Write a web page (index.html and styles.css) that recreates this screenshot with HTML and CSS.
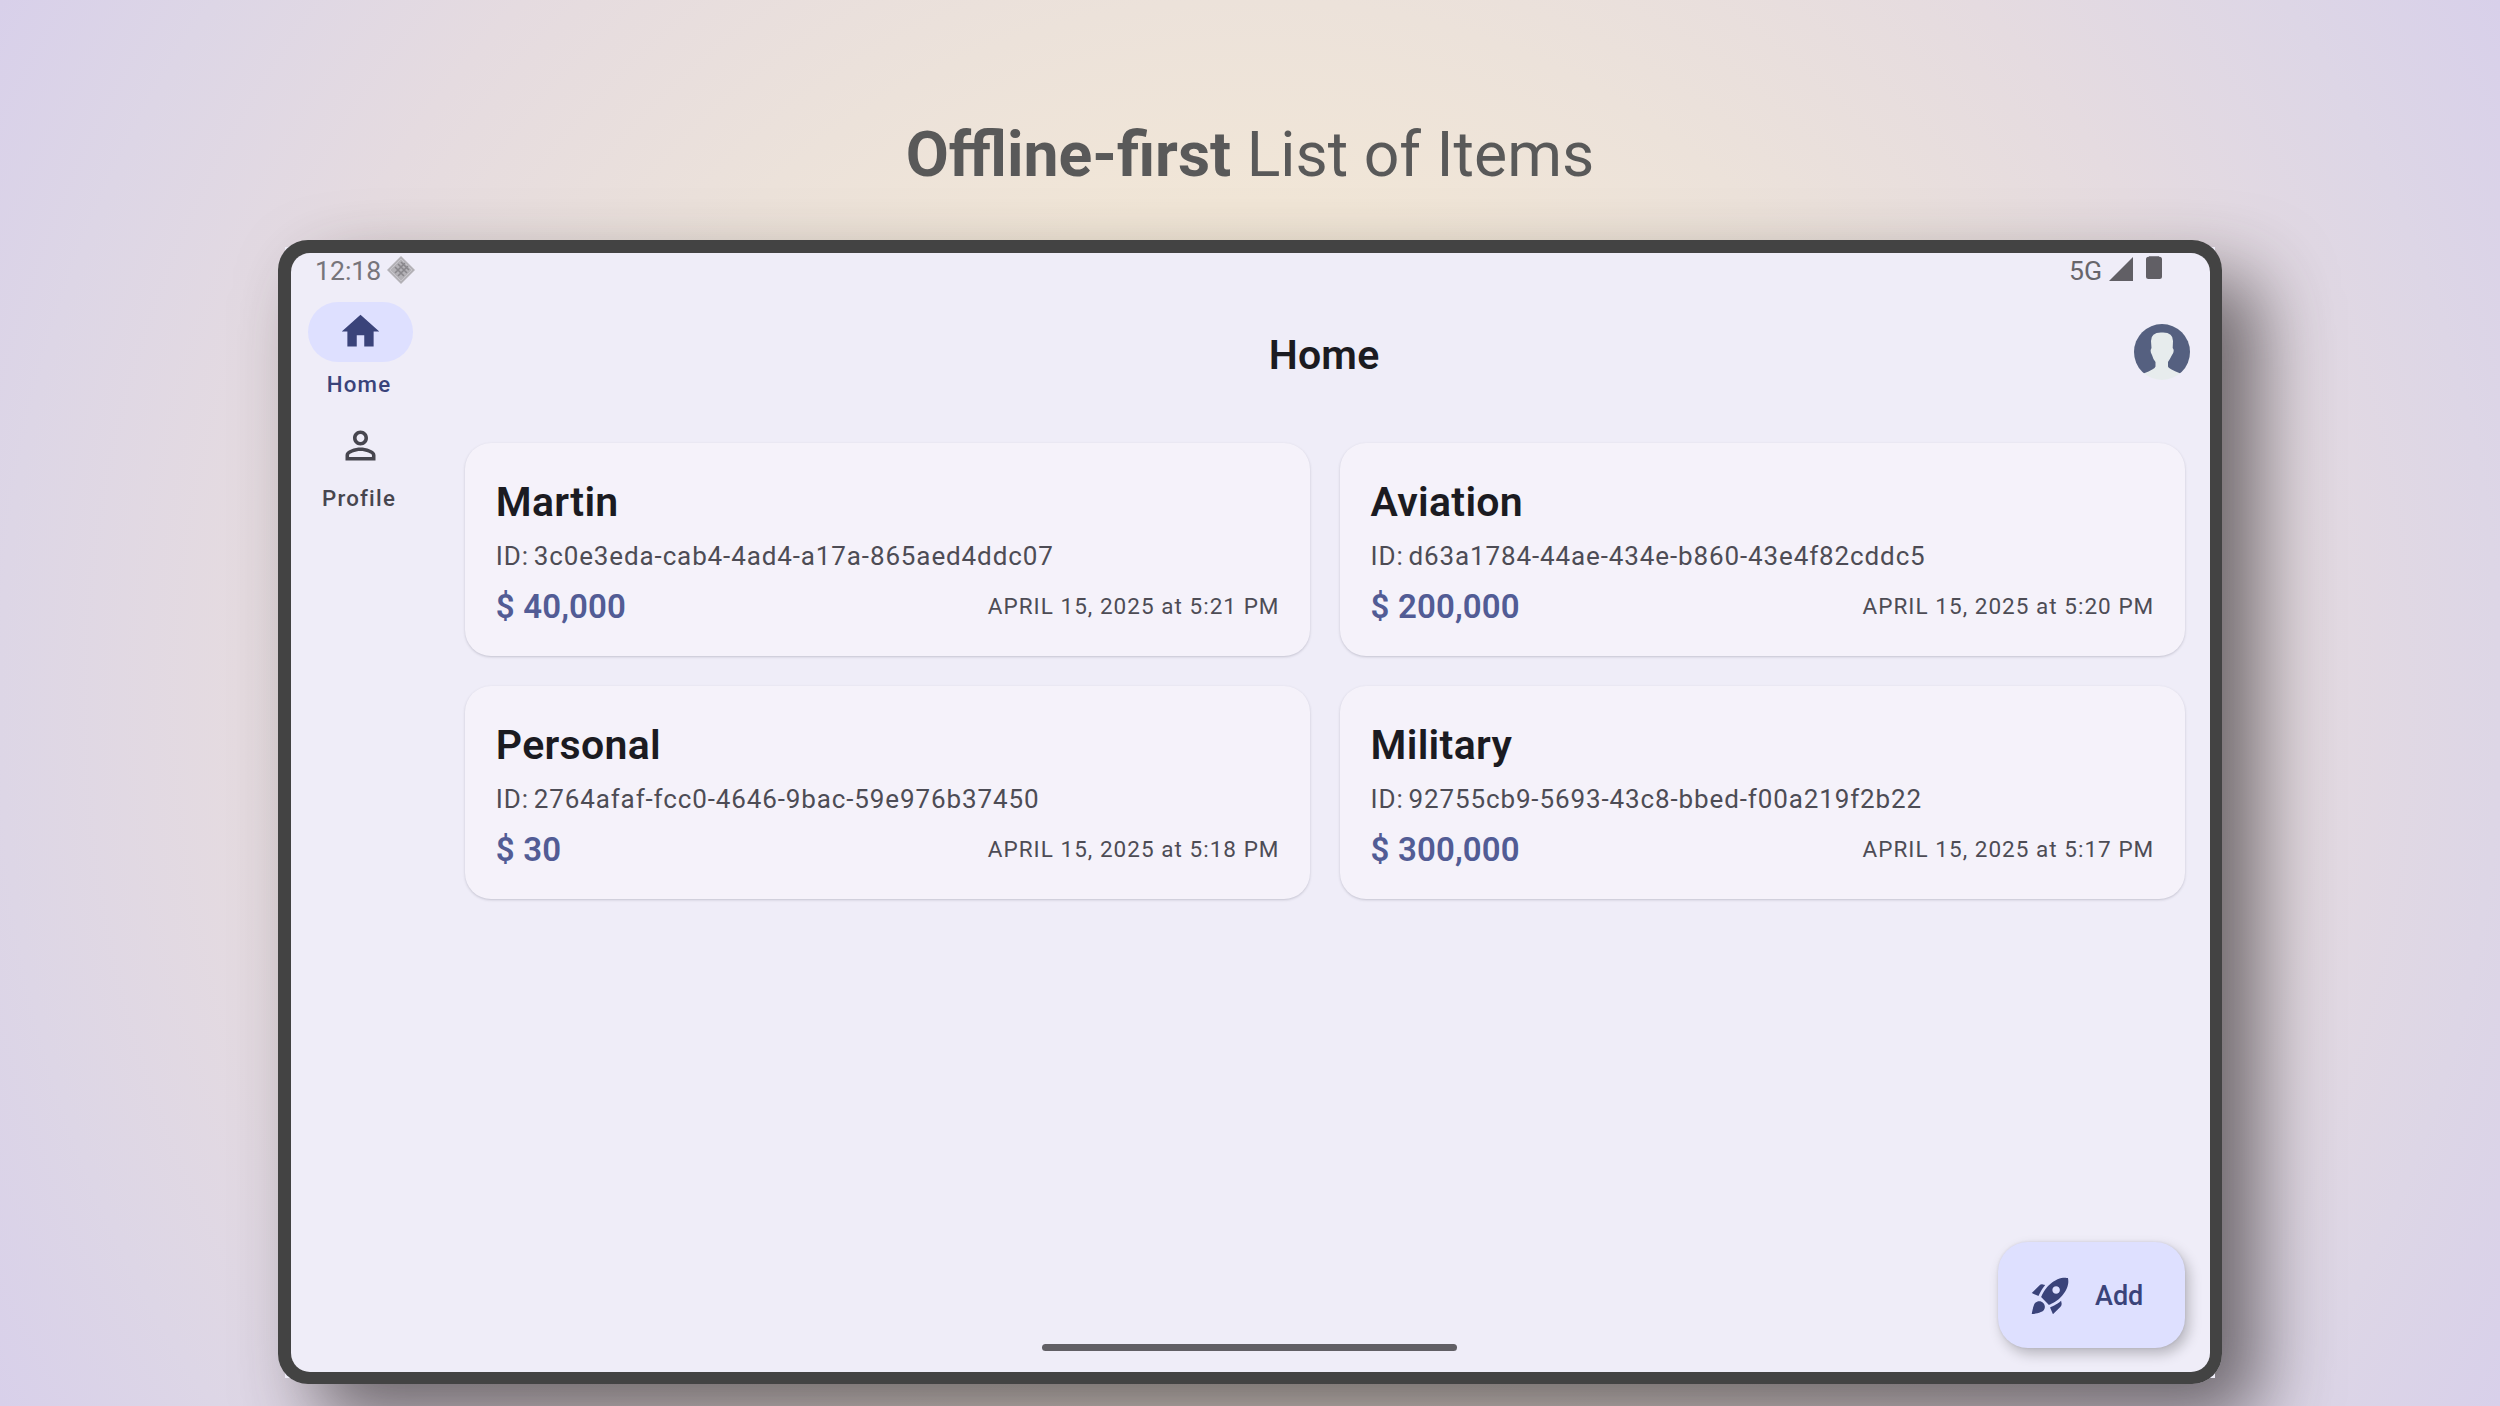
FILE: index.html
```html
<!DOCTYPE html>
<html lang="en">
<head>
<meta charset="utf-8">
<title>Offline-first List of Items</title>
<link rel="stylesheet" href="styles.css">
</head>
<body>
<h1 class="headline"><b>Offline-first</b> List of Items</h1>
<div class="device">
 <div class="bezel">
  <div class="screen">
    <header class="status">
      <span class="clock">12:18</span>
      <svg class="notif" viewBox="0 0 28 28"><path d="M14 0 28 14 14 28 0 14Z" fill="#b3b1b6"/><path d="M14 3 25 14 14 25 3 14Z" fill="none" stroke="#c6c4ca" stroke-width="1"/><path d="M8 11 17 20M11 8 20 17M14 6 22 14M8 17 18 7M11 20 21 10" stroke="#89878c" stroke-width="1.600"/></svg>
      <span class="net">5G</span>
      <svg class="signal" viewBox="0 0 24 24"><path d="M0 24 24 0V24Z" fill="#615f65"/></svg>
      <svg class="battery" viewBox="0 0 16 24"><path d="M3 .8V.3H13V.8H13.500Q16 .8 16 3.500V20.500Q16 23 13.500 23H2.500Q0 23 0 20.500V3.500Q0 .8 2.500 .8Z" fill="#615f65"/></svg>
    </header>
    <div class="body">
      <nav class="rail">
        <a class="item active"><span class="pill"><svg viewBox="0 0 24 24"><path d="M10 20v-6h4v6h5v-8h3L12 3 2 12h3v8z"/></svg></span><span class="label">Home</span></a>
        <a class="item"><span class="pill"><svg viewBox="0 0 24 24"><path d="M12 5.900c1.160 0 2.100.94 2.100 2.100s-.94 2.100-2.100 2.100S9.900 9.160 9.900 8s.94-2.100 2.100-2.100m0 9c2.970 0 6.100 1.460 6.100 2.100v1.100H5.900V17c0-.64 3.130-2.100 6.100-2.100M12 4C9.790 4 8 5.790 8 8s1.790 4 4 4 4-1.790 4-4-1.790-4-4-4zm0 9c-2.670 0-8 1.340-8 4v3h16v-3c0-2.660-5.330-4-8-4z"/></svg></span><span class="label">Profile</span></a>
      </nav>
      <main class="main">
        <div class="topbar">
          <h2>Home</h2>
          <svg class="avatar" viewBox="0 0 56 56"><clipPath id="c"><circle cx="28" cy="28" r="28"/></clipPath><g clip-path="url(#c)"><path d="M0 0H56V56H0Z" fill="#e7eced"/><path d="M-1-1H57V57L46.500 49.500Q34 44.500 34 42.500V38Q36 35 38 31Q41 27 38.700 24L39 17Q39 8 28 8.500Q17 8 17 17L17.500 24Q15.500 27 18 31Q19 35 21.500 38V42.500Q21 45 9.500 49.500L-1 57Z" fill="#556080"/></g></svg>
        </div>
        <div class="cards">
          <article class="card"><h3>Martin</h3><p class="id">ID: 3c0e3eda-cab4-4ad4-a17a-865aed4ddc07</p><div class="row"><strong>$ 40,000</strong><time>APRIL 15, 2025 at 5:21 PM</time></div></article>
          <article class="card"><h3>Aviation</h3><p class="id">ID: d63a1784-44ae-434e-b860-43e4f82cddc5</p><div class="row"><strong>$ 200,000</strong><time>APRIL 15, 2025 at 5:20 PM</time></div></article>
          <article class="card"><h3>Personal</h3><p class="id">ID: 2764afaf-fcc0-4646-9bac-59e976b37450</p><div class="row"><strong>$ 30</strong><time>APRIL 15, 2025 at 5:18 PM</time></div></article>
          <article class="card"><h3>Military</h3><p class="id">ID: 92755cb9-5693-43c8-bbed-f00a219f2b22</p><div class="row"><strong>$ 300,000</strong><time>APRIL 15, 2025 at 5:17 PM</time></div></article>
        </div>
      </main>
    </div>
    <button class="fab"><svg viewBox="0 0 24 24"><path d="M9.190 6.350c-2.040 2.290-3.440 5.580-3.570 5.890L2 10.690l4.050-4.050c.47-.47 1.150-.68 1.810-.55l1.330.26zM11.170 17s3.740-1.550 5.890-3.700c5.400-5.400 4.500-9.620 4.210-10.570-.95-.3-5.170-1.190-10.570 4.210C8.550 9.090 7 12.830 7 12.830L11.170 17zm6.480-2.190c-2.290 2.040-5.580 3.440-5.890 3.570L13.310 22l4.050-4.050c.47-.47.68-1.150.55-1.810l-.26-1.330zM9 18c0 .83-.34 1.580-.88 2.120C6.940 21.300 2 22 2 22s.7-4.940 1.880-6.120C4.420 15.340 5.170 15 6 15c1.660 0 3 1.340 3 3zm4-9c0-1.100.9-2 2-2s2 .9 2 2-.9 2-2 2-2-.9-2-2z"/></svg><span>Add</span></button>
    <div class="handle"></div>
  </div>
 </div>
</div>
</body>
</html>
```
FILE: styles.css
```css
* { box-sizing: border-box; }
body {
  margin: 0; width: 2500px; height: 1406px; overflow: hidden;
  display: flex; flex-direction: column; align-items: center;
  font-family: Roboto, sans-serif; color: #1b1b21;
  background: radial-gradient(circle at 1250px 703px, #f7ead0 0, #f1e6d7 500px, #ece2da 703px, #e5dbe0 1010px, #ddd6e6 1250px, #d8d0ea 1434px);
}
h1, h2, h3, p { margin: 0; }
svg { display: block; flex: none; }
.headline { height: 240px; padding-top: 117px; font-size: 62.500px; line-height: 76px; font-weight: 400; color: #595959; white-space: nowrap; }
.headline b { font-weight: 700; }
.device { position: relative; width: 1944px; height: 1144px; flex: none; border-radius: 30px; box-shadow: 37px 37px 75px 0 rgba(40,35,38,.63); }
/* square corners of the display panel behind the rounded bezel */
.device::before { content: ""; position: absolute; inset: 7px 7px 6px; background: #efedf8; }
.bezel { position: relative; height: 100%; padding: 12.5px; background: #434343; border-radius: 30px; }
.screen { position: relative; height: 100%; border-radius: 19px; background: #efedf8; overflow: hidden; display: flex; flex-direction: column; }
.status { height: 40px; flex: none; display: flex; align-items: flex-start; padding: 3px 47.500px 0 24.500px; font-size: 26.600px; line-height: 30px; color: #77757b; }
.notif { width: 28px; height: 28px; margin: 0 auto 0 6px; }
.net { color: #67656b; }
.signal { width: 24px; height: 24px; margin: 1px 13px 0 7px; }
.battery { width: 16px; height: 24px; }
.body { display: flex; flex: 1; }
.rail { width: 134px; flex: none; display: flex; flex-direction: column; padding: 9px 0 0 17px; gap: 16px; color: #47464f; }
.item { width: 105px; height: 97.500px; flex: none; display: flex; flex-direction: column; align-items: center; }
.pill { width: 105px; height: 60px; flex: none; border-radius: 30px; display: flex; align-items: center; justify-content: center; }
.pill svg { width: 45px; height: 45px; fill: currentColor; }
.active { color: #3a437a; }
.active .pill { background: #dee0ff; }
.label { margin: 8.500px 2px 0 0; font-size: 22.300px; line-height: 28px; font-weight: 500; letter-spacing: 1.200px; }
.main { flex: 1; padding: 0 24.700px 0 40.800px; }
.topbar { height: 150px; display: grid; grid-template-columns: 1fr auto 1fr; padding-top: 32px; align-items: start; }
.topbar h2 { grid-column: 2; margin-right: 2px; font-size: 41px; line-height: 60px; font-weight: 600; letter-spacing: .2px; }
.avatar { grid-column: 3; justify-self: end; width: 56px; height: 56px; margin: -.5px -5px 0 0; }
.cards { display: grid; grid-template-columns: 1fr 1fr; gap: 29.700px 30px; }
.card { height: 213.600px; border-radius: 26px; background: #f5f2fa; padding: 33.500px 30.500px 0; box-shadow: 0 1px 2.500px rgba(60,60,80,.24); }
.card h3 { font-size: 41px; line-height: 52px; font-weight: 600; letter-spacing: .3px; }
.id { font-size: 26px; line-height: 36px; margin-top: 9.500px; letter-spacing: .88px; word-spacing: -2.500px; color: #4d4c55; white-space: nowrap; }
.row { display: flex; justify-content: space-between; align-items: center; height: 44px; margin-top: 10.500px; }
.row strong { font-size: 33px; font-weight: 600; letter-spacing: .15px; color: #525c95; }
.row time { font-size: 22.500px; letter-spacing: 1.030px; color: #4d4c55; }
.fab { position: absolute; right: 24.500px; bottom: 24px; width: 187px; height: 106px; border: 0; border-radius: 30px; background: #dee0ff; color: #3a437a; display: flex; align-items: center; padding: 2px 0 0 30px; gap: 22px; font: 500 27px Roboto, sans-serif; box-shadow: 4px 6px 13px rgba(0,0,0,.23), 0 0 3px rgba(0,0,0,.1); }
.fab svg { width: 45px; height: 45px; fill: currentColor; }
.fab span { padding-top: 1px; }
.handle { position: absolute; left: 751.500px; bottom: 20.500px; width: 415px; height: 7px; border-radius: 4px; background: #615f65; }
```
